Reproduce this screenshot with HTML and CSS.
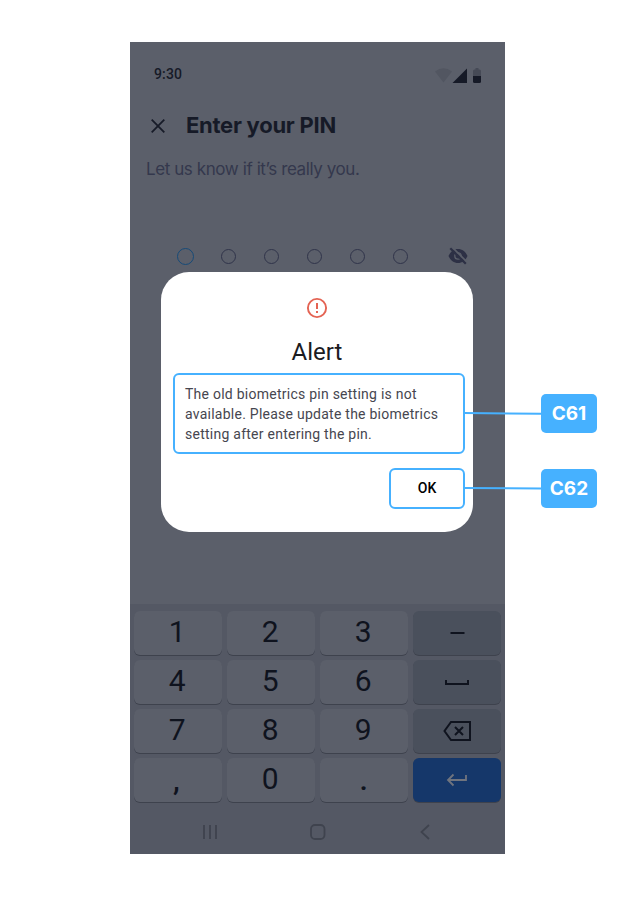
FILE: index.html
```html
<!DOCTYPE html>
<html lang="en">
<head>
<meta charset="utf-8">
<title>Enter your PIN</title>
<link rel="stylesheet" href="styles.css">
</head>
<body>
<main class="phone">
  <div class="status">
    <span>9:30</span>
    <svg width="50" height="18" viewBox="0 0 50 18">
      <path d="M0 4.500Q8.500-2 17 4.500L8.500 15.500Z" fill="#525661"/>
      <path d="M17.500 16H32V1.500Z" fill="#161a27"/>
      <path d="M38 9V4q0-1.500 1.500-1.500h1V1h3v1.500h1Q46 2.500 46 4v5Z" fill="#464a56"/>
      <path d="M38 9h8v5.500q0 1.500-1.500 1.500h-5Q38 16 38 14.500Z" fill="#161a27"/>
    </svg>
  </div>
  <header class="header">
    <svg width="16" height="16" viewBox="0 0 16 16"><path d="M1.700 1.700 14.300 14.300M14.300 1.700 1.700 14.300" fill="none" stroke="#171b28" stroke-width="1.800"/></svg>
    <h1>Enter your PIN</h1>
  </header>
  <p class="hint">Let us know if it’s really you.</p>
  <div class="pin">
    <i class="dot active"></i><i class="dot"></i><i class="dot"></i><i class="dot"></i><i class="dot"></i><i class="dot"></i>
    <svg class="eye" width="20" height="18" viewBox="0 0 20 18">
      <path d="M.5 9C2.500 4.500 6 2 10 2s7.500 2.500 9.500 7c-2 4.500-5.500 7-9.500 7S2.500 13.500.5 9Z" fill="#2d3045"/>
      <circle cx="10" cy="9" r="3.200" fill="none" stroke="#5b5f6a" stroke-width="1.300"/>
      <path d="M4.400.5 19.900 16" stroke="#5b5f6a" stroke-width="1.800"/>
      <path d="M2.300 1.300 17.800 16.800" stroke="#2d3045" stroke-width="2.200"/>
    </svg>
  </div>
  <section class="keyboard">
    <div class="keys">
      <span class="key">1</span><span class="key">2</span><span class="key">3</span>
      <span class="key fn"><svg width="40" height="30" viewBox="0 0 40 30"><path d="M13.500 15h14" stroke="#0f131e" stroke-width="2"/></svg></span>
      <span class="key">4</span><span class="key">5</span><span class="key">6</span>
      <span class="key fn"><svg width="40" height="30" viewBox="0 0 40 30"><path d="M9 13v4h22v-4" fill="none" stroke="#0f131e" stroke-width="2"/></svg></span>
      <span class="key">7</span><span class="key">8</span><span class="key">9</span>
      <span class="key fn"><svg width="40" height="30" viewBox="0 0 40 30"><path d="M14 6h19v18H14L7.500 15ZM18 11l8 8M26 11l-8 8" fill="none" stroke="#0f131e" stroke-width="2"/></svg></span>
      <span class="key comma">,</span><span class="key">0</span><span class="key point">.</span>
      <span class="key enter"><svg width="40" height="30" viewBox="0 0 40 30"><path d="M29 10v5H11M16.500 9.500 11 15l5.500 5.500" fill="none" stroke="#70747e" stroke-width="1.800"/></svg></span>
    </div>
    <nav class="nav">
      <svg width="16" height="16" viewBox="0 0 16 16"><path d="M2 1v14M8 1v14M14 1v14"/></svg>
      <svg width="16" height="16" viewBox="0 0 16 16"><rect x="1" y="1" width="13.500" height="14" rx="4"/></svg>
      <svg width="16" height="16" viewBox="0 0 16 16"><path d="M12 1 4.500 8 12 15"/></svg>
    </nav>
  </section>
  <section class="dialog">
    <svg class="alert" width="24" height="24" viewBox="0 0 24 24"><circle cx="12" cy="12" r="9.100" fill="none" stroke="#e46353" stroke-width="1.900"/><path d="M12 7v6M12 15v2" stroke="#e46353" stroke-width="2"/></svg>
    <h2>Alert</h2>
    <p class="message">The old biometrics pin setting is not available. Please update the biometrics setting after entering the pin.</p>
    <button class="ok">OK</button>
  </section>
  <div class="callout first"><svg width="77" height="4" viewBox="0 0 77 4"><path d="M0 1 77 1.800"/></svg><b>C61</b></div>
  <div class="callout second"><svg width="77" height="4" viewBox="0 0 77 4"><path d="M0 1 77 1.600"/></svg><b>C62</b></div>
</main>
</body>
</html>
```
FILE: styles.css
```css
* { box-sizing: border-box; }
body { margin: 0; background: #fff; height: 897px; padding: 42px 0 0 130px; font-family: Roboto, sans-serif; }
h1, h2, p { margin: 0; }
svg { display: block; flex: none; }
.phone { position: relative; width: 375px; height: 812px; background: #5b5f6a; display: flex; flex-direction: column; }
.status { height: 64px; padding: 0 20px 0 24px; display: flex; align-items: center; justify-content: space-between; font-size: 14px; font-weight: 500; color: #161a27; letter-spacing: .14px; }
.status svg { margin-top: 3px; }
.header { height: 40px; padding-left: 20px; display: flex; align-items: center; gap: 20px; }
.header h1 { font: 700 22px/28px Inter, sans-serif; color: #161a27; letter-spacing: -.26px; margin-top: -2px; }
.hint { padding: 12px 16px 0; font: 400 17px/22px Inter, sans-serif; color: #34384d; letter-spacing: -.41px; white-space: nowrap; }
.pin { margin: 66px 0 0 48px; height: 20px; display: flex; align-items: center; gap: 28px; }
.dot { width: 15px; height: 15px; border: 1px solid #30344a; border-radius: 50%; }
.dot.active { width: 17px; height: 17px; margin: 0 -1px; border-color: #164a78; }
.eye { margin-left: 12px; }
.keyboard { margin-top: auto; height: 250px; background: #545864; padding: 7px 4px 0; }
.keys { display: grid; grid-template-columns: repeat(3, 87.5px) 88px; grid-auto-rows: 44px; gap: 5px; justify-content: space-between; }
.key { border-radius: 6px; background: #5b5f6a; box-shadow: 0 1px 0 #3e424d; display: flex; align-items: center; justify-content: center; font-size: 30px; line-height: 40px; color: #0f131e; padding: 0 1px 2px 0; }
.key.fn { background: #4a505c; padding: 0; }
.key.enter { background: #15376a; padding: 0; }
.key.comma { padding: 0 3px 0 0; font-weight: 500; }
.key.point { padding: 0; font-weight: 500; }
.nav { height: 58px; padding: 2px 68px 0; display: flex; align-items: center; justify-content: space-between; }
.nav svg { fill: none; stroke: #3f434e; stroke-width: 1.8; }
.dialog { position: absolute; left: 31px; top: 230px; width: 312px; height: 260px; border-radius: 28px; background: #fff; padding: 24px 8px 0 12px; display: flex; flex-direction: column; align-items: center; }
.alert { margin-right: 4px; }
.dialog h2 { margin: 16px 4px 0 0; font-size: 24px; line-height: 32px; font-weight: 400; color: #1b1b1f; }
.message { width: 292px; height: 81px; margin-top: 5px; padding: 9px 10px; border: 2px solid #46b1ff; border-radius: 6px; font-size: 14px; line-height: 20px; letter-spacing: .25px; color: #46464f; }
.ok { width: 76px; height: 41px; margin-top: 14px; align-self: flex-end; border: 2px solid #46b1ff; border-radius: 6px; background: #fff; font: 500 14px/20px Roboto, sans-serif; letter-spacing: .1px; color: #000; padding: 0 0 1px; }
.callout { position: absolute; left: 334px; display: flex; align-items: center; height: 39px; }
.callout.first { top: 352px; }
.callout.second { top: 427px; }
.callout svg { stroke: #46b1ff; stroke-width: 2; }
.callout b { width: 56px; height: 39px; border-radius: 5px; background: #46b1ff; color: #fff; font: 700 19px/39px Inter, sans-serif; text-align: center; }
```
